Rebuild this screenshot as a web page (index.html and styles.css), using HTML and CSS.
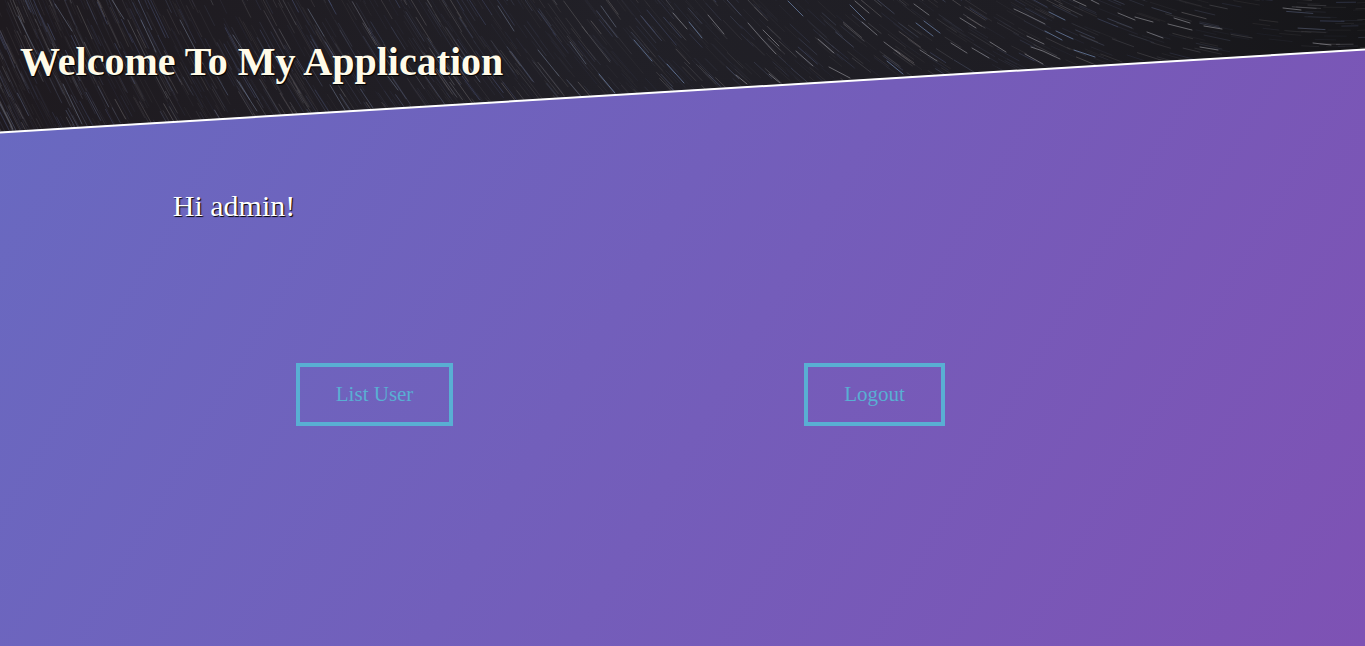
FILE: index.html
```html
<!DOCTYPE html>
<html lang="en">
<head>
<meta charset="utf-8">
<meta name="viewport" content="width=device-width, initial-scale=1">
<title>My Application</title>
<link rel="stylesheet" href="styles.css">
</head>
<body>
<header class="banner">
  <svg class="sky" viewBox="0 0 1365 134" preserveAspectRatio="none" aria-hidden="true">
    <defs>
      <linearGradient id="night" x1="0" x2="1" y1="0" y2="0">
        <stop offset="0" stop-color="#1e1a1f"/>
        <stop offset="0.45" stop-color="#212027"/>
        <stop offset="0.75" stop-color="#1e1d23"/>
        <stop offset="1" stop-color="#151518"/>
      </linearGradient>
      <clipPath id="slant"><path d="M0 0H1365V49L0 132Z"/></clipPath>
    </defs>
    <g clip-path="url(#slant)">
      <path fill="url(#night)" d="M0 0H1365V134H0Z"/>
      <g id="trails" fill="none" stroke-linecap="round"></g>
      <g fill="none" stroke="#8795b0" stroke-opacity="0.42" stroke-linecap="round">
        <path d="M18 16L37 54M55 4L72 31M112 0L124 19M141 20L156 52M180 20L203 64M233 35L250 61M308 9L324 36M237 80L257 111M330 85L345 110M0 104L13 130M63 84L82 124M498 6L514 31M601 6L616 27M383 70L398 90M570 42L586 64M454 48L480 82M538 50L559 76"/>
        <path stroke="#7f9ac6" stroke-opacity="0.6" d="M634 40L652 61M689 22L702 38M667 64L684 83M599 74L615 93M788 1L803 16M916 23L933 36M924 21L940 33M887 61L903 74M850 5L865 20M1045 31L1062 40M1056 31L1073 39M1074 50L1095 57M1049 12L1065 20"/>
      </g>
      <g fill="none" stroke="#b4b4ba" stroke-opacity="0.5" stroke-linecap="round">
        <path d="M708 15L724 34M673 13L687 29M748 23L762 39L776 54M763 30L779 46M796 51L813 66M818 39L834 53M855 1L869 13M862 22L877 35M914 4L929 15M960 18L976 28M884 42L900 54M920 50L937 61M951 43L967 53M972 48L989 58M990 42L1006 52M1014 9L1029 16L1045 24M1027 36L1044 44M1025 54L1043 64M1031 47L1043 51L1060 59M1073 0L1086 6M1091 0L1099 4M1118 13L1135 20M1135 17L1153 22M1168 24L1180 27L1192 30M1174 18L1190 23M1147 32L1163 38M1200 47L1218 50M1204 26L1222 29M1283 8L1301 10M1313 43L1331 45M736 75L747 84M769 74L780 83M829 67L850 78"/>
      </g>
    </g>
    <path d="M0 132.500L1365 49.500" fill="none" stroke="#fff" stroke-width="2"/>
  </svg>
  <h1 class="title">Welcome To My Application</h1>
</header>
<main class="content">
  <p class="greeting">Hi admin!</p>
  <nav class="actions">
    <div class="action"><a class="btn" href="#users">List User</a></div>
    <div class="action"><a class="btn" href="#logout">Logout</a></div>
  </nav>
</main>
<script src="trails.js"></script>
</body>
</html>
```
FILE: styles.css
```css
* {
  box-sizing: border-box;
}

body {
  margin: 0;
  min-height: 100vh;
  background: linear-gradient(120deg, #686ac1, #7e52b4);
  font-family: "Liberation Serif", "Times New Roman", serif;
}

.banner {
  position: relative;
  height: 134px;
  padding: 39px 20px;
}

.sky {
  position: absolute;
  inset: 0;
  width: 100%;
  height: 100%;
}

.title {
  position: relative;
  margin: 0;
  color: #fffbe9;
  font-size: 40px;
  line-height: 46px;
  text-shadow: 1px 1px 1px #000;
}

.content {
  padding: 54px 12%;
}

.greeting {
  margin: 0;
  padding-left: 9px;
  color: #fff;
  font-size: 30px;
  line-height: 36px;
  text-shadow: 1px 1px 1px #000;
}

.actions {
  display: grid;
  grid-template-columns: 1fr 1fr;
  width: 98%;
  margin-top: 139px;
}

.action {
  padding-left: 132px;
}

.btn {
  display: inline-block;
  padding: 16px 36px;
  border: 4px solid #59afd3;
  color: #59afd3;
  font-size: 21px;
  line-height: 23px;
  text-decoration: none;
}
```
FILE: trails.js
```js
// Faint star trails: short arcs around a pole above the right end of the sky.
(function () {
  var group = document.getElementById("trails");
  var pole = { x: 1330, y: -560 };
  var seed = 7;
  function rand() {
    seed = (seed * 16807) % 2147483647;
    return seed / 2147483647;
  }
  var tones = ["#5b6480", "#66666c", "#4c5578", "#6e6a6c"];
  for (var i = 0; i < 1900; i++) {
    var x = Math.pow(rand(), 1.35) * 1400 - 30;
    var y = rand() * 160 - 30;
    var dx = pole.x - x;
    var dy = y - pole.y;
    var r = Math.sqrt(dx * dx + dy * dy);
    var len = 16 + rand() * (x < 650 ? 30 : 12);
    var path = document.createElementNS("http://www.w3.org/2000/svg", "path");
    path.setAttribute("d", "M" + x.toFixed(1) + " " + y.toFixed(1) +
      "l" + (dy / r * len).toFixed(1) + " " + (dx / r * len).toFixed(1));
    path.setAttribute("stroke", tones[i % 4]);
    path.setAttribute("stroke-opacity", (0.1 + Math.pow(rand(), 3) * 0.45).toFixed(2));
    group.appendChild(path);
  }
})();
```
